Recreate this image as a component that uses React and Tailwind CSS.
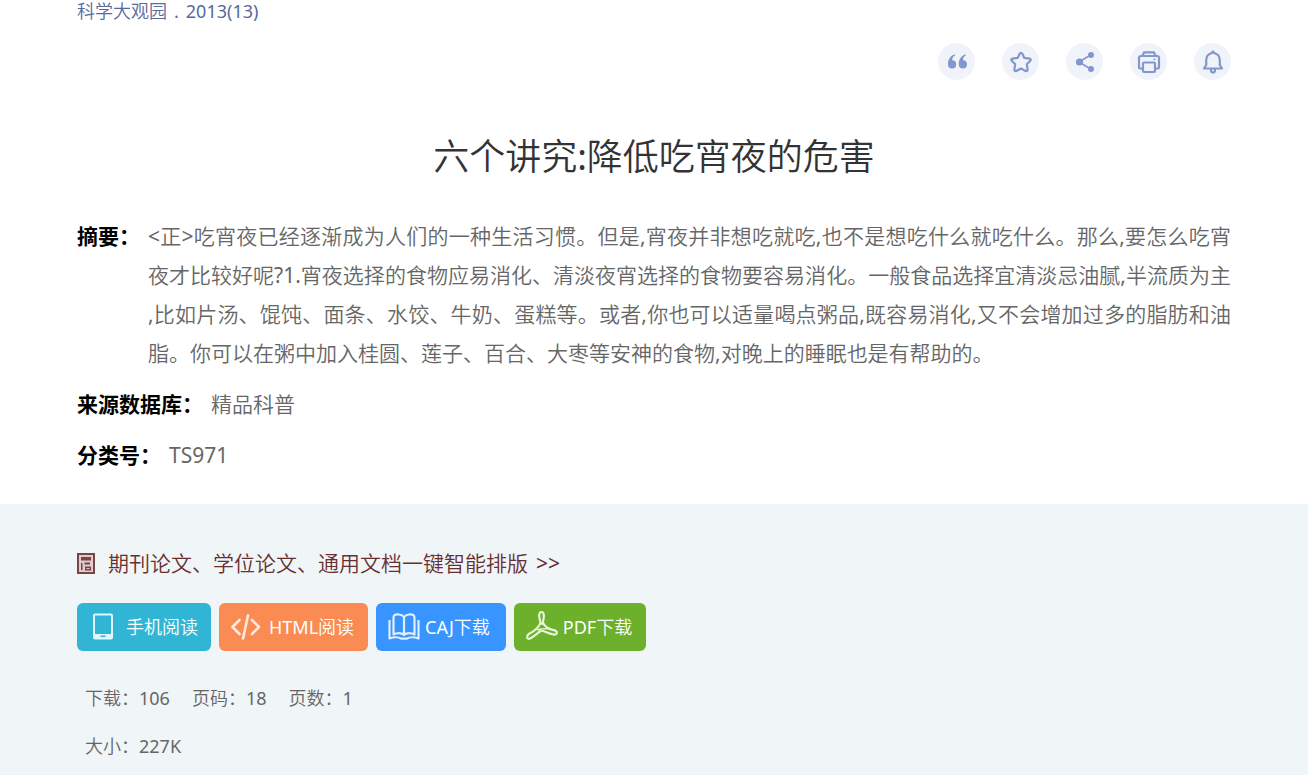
import React from "react";

function QuoteIcon() {
  return (
    <svg viewBox="0 0 24 24" className="size-6" fill="#8297cb" aria-hidden="true">
      <path d="M9.600 4.200C5.400 5.600 3 9.200 3 14.400a4.100 4.100 0 1 0 4.300-4.100C7 8.200 8 6.500 10.200 5.300Z" />
      <path d="M20.400 4.200c-4.200 1.400-6.600 5-6.600 10.200a4.100 4.100 0 1 0 4.300-4.100c-.3-2.100.7-3.800 2.900-5Z" />
    </svg>
  );
}

function StarIcon() {
  return (
    <svg viewBox="0 0 24 24" className="size-6" fill="none" stroke="#8297cb" strokeWidth="2.200" strokeLinejoin="round" aria-hidden="true">
      <path d="M12 2.800Q13 2.800 13.500 4L15.200 7.800 20.400 8.600Q22.500 9.200 21.300 10.800L17.800 14.300 18.600 19.400Q18.600 21.600 16.600 20.900L12 18.500 7.400 20.900Q5.400 21.600 5.400 19.400L6.200 14.300 2.700 10.800Q1.500 9.200 3.600 8.600L8.800 7.800 10.500 4Q11 2.800 12 2.800Z" />
    </svg>
  );
}

function ShareIcon() {
  return (
    <svg viewBox="0 0 24 24" className="size-6" fill="#8297cb" stroke="#8297cb" strokeWidth="1.600" aria-hidden="true">
      <path d="M17.500 5 6 12l11.500 7" fill="none" />
      <circle cx="18" cy="5" r="2.200" />
      <circle cx="6.500" cy="12" r="2.800" />
      <circle cx="18" cy="19" r="2.200" />
    </svg>
  );
}

function PrinterIcon() {
  return (
    <svg viewBox="0 0 24 24" className="size-6" fill="none" stroke="#8297cb" strokeWidth="2.200" strokeLinejoin="round" aria-hidden="true">
      <path d="M5.500 6 7 2.300h10L18.500 6" />
      <path d="M6 18.500H3.500A1.500 1.500 0 0 1 2 17V8a2 2 0 0 1 2-2h16a2 2 0 0 1 2 2v9a1.500 1.500 0 0 1-1.500 1.500H18" />
      <rect x="6" y="12.500" width="12" height="9.500" rx="1" />
      <path d="M16.500 9.300h2" strokeWidth="1.500" />
    </svg>
  );
}

function BellIcon() {
  return (
    <svg viewBox="0 0 24 24" className="size-6" fill="none" stroke="#8297cb" strokeWidth="2.200" strokeLinejoin="round" strokeLinecap="round" aria-hidden="true">
      <path d="M12 1.500 10.500 3.300C7.500 4 5.200 6.800 5.200 10.500V15L3 18.500h18L18.800 15v-4.500c0-3.700-2.300-6.500-5.300-7.200Z" />
      <path d="M10 19.500v1a2 2 0 0 0 4 0v-1" />
    </svg>
  );
}

function LayoutIcon() {
  return (
    <svg viewBox="0 0 18 21" className="h-[21px] w-[18px] shrink-0" aria-hidden="true">
      <rect x="1" y="1" width="16" height="19" fill="#e0cccc" stroke="#7a4545" strokeWidth="2" />
      <path d="M4 4h10v3.500H4zM4 10h1.500v7H4zM7.500 9.500H13v2H7.500zM8 13.500h6v4H8z" fill="#7b4444" />
      <path d="M9.500 15.500h3" stroke="#e0cccc" />
    </svg>
  );
}

function PhoneIcon() {
  return (
    <svg viewBox="0 0 22 28" className="h-7 w-[22px]" fill="none" stroke="#dff6fb" aria-hidden="true">
      <rect x="2" y="1.500" width="18" height="24" rx="1" strokeWidth="2" />
      <path d="M2 23h18" strokeWidth="4" />
      <path d="M8.500 23.300h5" stroke="#30b5d5" strokeWidth="1.500" />
    </svg>
  );
}

function CodeIcon() {
  return (
    <svg viewBox="0 0 30 26" className="h-[26px] w-[30px]" fill="none" stroke="#ffeadf" strokeWidth="2.600" strokeLinecap="round" strokeLinejoin="round" aria-hidden="true">
      <path d="M8.500 6 1.500 13l7 7M21 6l7 7-7 7M17 1.500l-5 23" />
    </svg>
  );
}

function BookIcon() {
  return (
    <svg viewBox="0 0 32 28" className="h-7 w-8" fill="none" stroke="#e0eeff" strokeWidth="2.200" strokeLinejoin="round" aria-hidden="true">
      <path d="M16 4C14 1 8 1 6.500 2.200 5.500 3 5.500 4 5.500 5v16.500c3-2 8-2 10.500.5 2.500-2.500 7.500-2.500 10.500-.5V5c0-1 0-2-1-2.800C24 1 18 1 16 4Zm0 0v18" />
      <path d="M1.500 7v18.500c4-1.500 9-1.500 12 .2h5c3-1.700 8-1.700 12-.2V7" />
    </svg>
  );
}

function PdfIcon() {
  return (
    <svg viewBox="0 0 32 32" className="size-8" fill="none" stroke="#e5f5d6" strokeWidth="2.200" strokeLinejoin="round" aria-hidden="true">
      <path d="M14.500 11C12.500 6 12.800 1 15.500 1s3 5 1.300 10" />
      <path d="M14.800 11C13.500 15.500 8 20.500 3.500 22.500 0 24.500.5 29 4 27.500c4-2 8-6 11.500-8" />
      <path d="M16.800 11c1 4 5.500 7.200 10 7.800 5.700 1 5 5.200.7 4.700-4-.7-8-2.700-12-4" />
      <path d="M14.800 11 16 13.500 16.800 11M11 19c3-1 7-1.500 12-1.500" strokeWidth="1.600" />
    </svg>
  );
}

const TOOLS = [
  { label: "引用", Icon: QuoteIcon },
  { label: "收藏", Icon: StarIcon },
  { label: "分享", Icon: ShareIcon },
  { label: "打印", Icon: PrinterIcon },
  { label: "提醒", Icon: BellIcon },
];

const ACTIONS = [
  { label: "手机阅读", Icon: PhoneIcon, style: "bg-[#30b5d5] pl-[15px] pr-[13px] gap-3" },
  { label: "HTML阅读", Icon: CodeIcon, style: "bg-[#fa8b52] pl-3 pr-[14px] gap-2" },
  { label: "CAJ下载", Icon: BookIcon, style: "bg-[#3894ff] pl-3 pr-4 gap-[5px]" },
  { label: "PDF下载", Icon: PdfIcon, style: "bg-[#6cb02c] pl-3 pr-[14px] gap-[5px]" },
];

const TERM = "shrink-0 font-['Noto_Sans','Noto_Sans_CJK_SC',sans-serif] font-bold whitespace-nowrap text-black";

export default function App() {
  return (
    <div className="flex min-h-screen flex-col bg-white font-['Noto_Sans','Noto_Sans_CJK_SC_DemiLight','Noto_Sans_CJK_SC',sans-serif] text-[21px] text-[#666]">
      <main className="px-[77px]">
        <p className="flex gap-[7px] text-lg leading-[22px] text-[#576a9c]">
          <a href="#journal">科学大观园</a>
          <span>.</span>
          <a href="#issue">2013(13)</a>
        </p>

        <div className="mt-[21px] flex justify-end gap-[27px]">
          {TOOLS.map(({ label, Icon }) => (
            <button key={label} type="button" aria-label={label} className="flex size-[37px] items-center justify-center rounded-full bg-[#f0f3fa]">
              <Icon />
            </button>
          ))}
        </div>

        <h1 className="mt-[51px] text-center text-4xl leading-[52px] text-[#333]">六个讲究:降低吃宵夜的危害</h1>

        <dl className="mt-[34px] mb-[29px] leading-[39px]">
          <div className="flex">
            <dt className={`w-[71px] ${TERM}`}>摘要：</dt>
            <dd className="min-w-0 flex-1 text-justify [line-break:anywhere]">
              &lt;正&gt;吃宵夜已经逐渐成为人们的一种生活习惯。但是,宵夜并非想吃就吃,也不是想吃什么就吃什么。那么,要怎么吃宵夜才比较好呢?1.宵夜选择的食物应易消化、清淡夜宵选择的食物要容易消化。一般食品选择宜清淡忌油腻,半流质为主,比如片汤、馄饨、面条、水饺、牛奶、蛋糕等。或者,你也可以适量喝点粥品,既容易消化,又不会增加过多的脂肪和油脂。你可以在粥中加入桂圆、莲子、百合、大枣等安神的食物,对晚上的睡眠也是有帮助的。
            </dd>
          </div>
          <div className="mt-3 flex gap-2">
            <dt className={TERM}>来源数据库：</dt>
            <dd>精品科普</dd>
          </div>
          <div className="mt-3 flex gap-2">
            <dt className={TERM}>分类号：</dt>
            <dd>TS971</dd>
          </div>
        </dl>
      </main>

      <section className="flex-1 bg-[#f0f5f8] px-[77px] pt-11">
        <a href="#layout" className="flex items-center gap-[13px] leading-[30px] text-[#682f30]">
          <LayoutIcon />
          <span className="flex gap-2">
            期刊论文、学位论文、通用文档一键智能排版 <span>&gt;&gt;</span>
          </span>
        </a>

        <div className="mt-[25px] flex gap-2">
          {ACTIONS.map(({ label, Icon, style }) => (
            <button key={label} type="button" className={`flex h-12 items-center rounded-md text-lg whitespace-nowrap text-white ${style}`}>
              <Icon />
              {label}
            </button>
          ))}
        </div>

        <div className="mt-[23px] pl-2 text-lg leading-12">
          <p className="flex gap-[22px]">
            <span>下载：106</span>
            <span>页码：18</span>
            <span>页数：1</span>
          </p>
          <p>大小：227K</p>
        </div>
      </section>
    </div>
  );
}
